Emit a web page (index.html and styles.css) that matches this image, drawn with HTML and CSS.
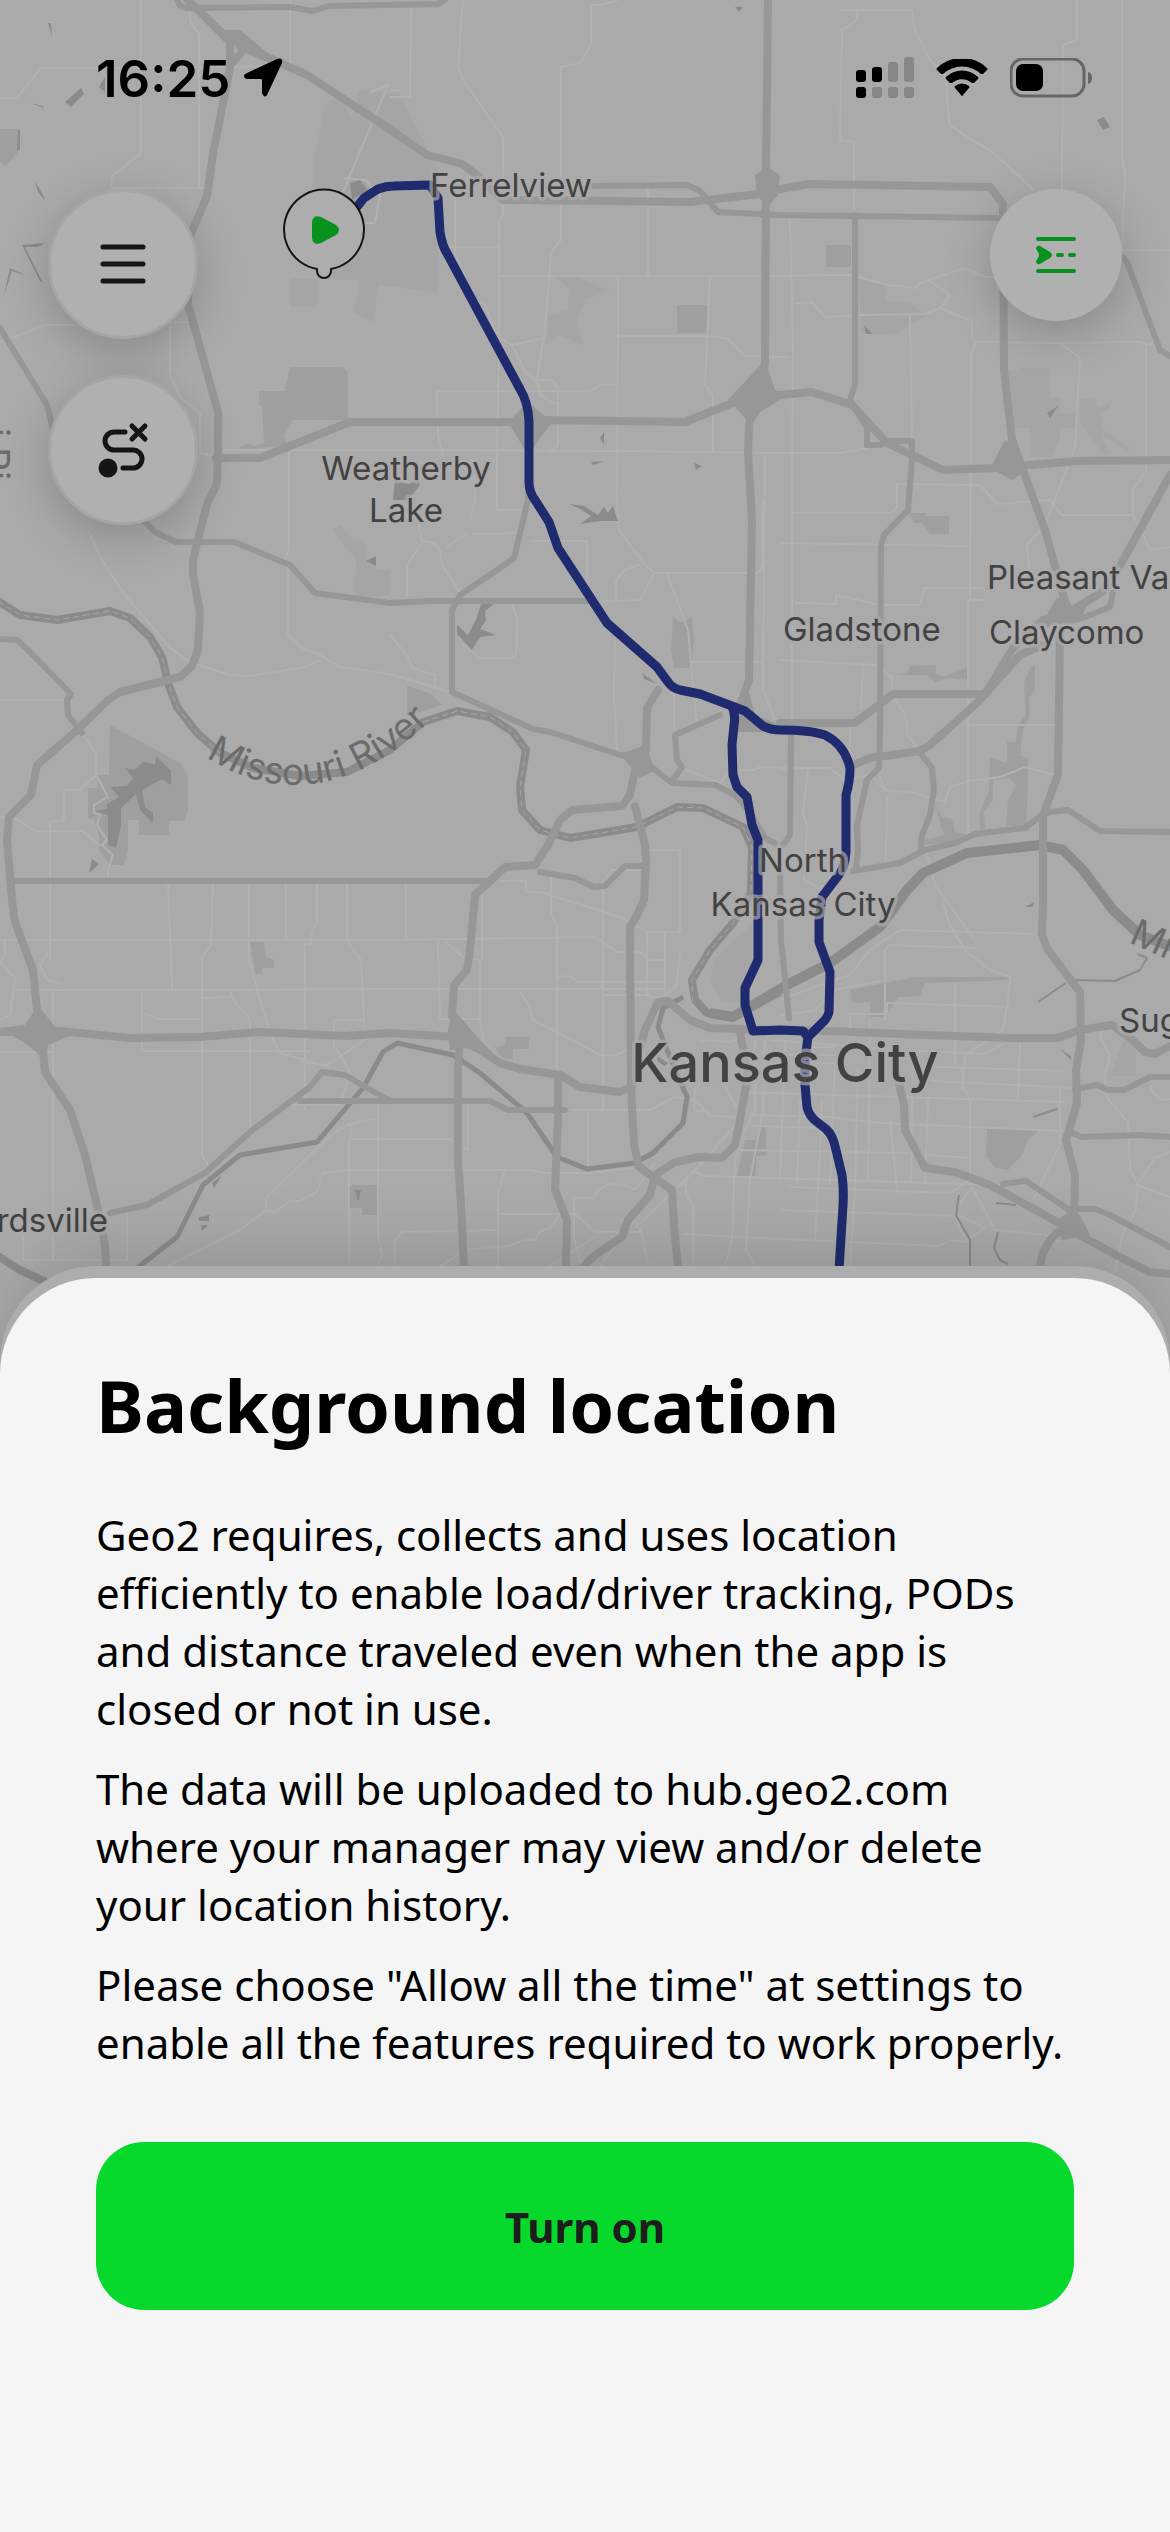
FILE: index.html
```html
<!DOCTYPE html>
<html lang="en">
<head>
  <meta charset="UTF-8">
  <meta name="viewport" content="width=device-width, initial-scale=1.0">
  <title>Background location</title>
  <link rel="stylesheet" href="styles.css">
</head>
<body>
  <div class="screen">

    <!-- Map -->
    <svg class="map" viewBox="0 0 1170 1400" preserveAspectRatio="xMidYMin slice" aria-hidden="true">
      <!-- Parks -->
      <g class="park soft">
        <path d="M325 105L335 97L345 105L352 120L358 90L400 95L438 170V293L405 288L378 285L374 322L354 313L360 280L290 278V307H317V260L340 190L312 190L316 150Z"/>
        <path d="M555 275L575 277L610 290L585 300L577 320L583 346L560 335L546 344L549 315L568 310L569 290Z"/>
        <path d="M858 278L885 286V301L910 302L926 316L895 334H862Z"/>
        <path d="M1008 370H1020V385V368H1050V398H1060V413H1076V428H1060V440L1050 457H1030V428H1012Z"/>
        <path d="M1080 398H1094L1098 408L1110 404V409L1098 412L1104 430L1130 448L1127 452L1100 432L1110 455H1104L1080 422Z"/>
        <path d="M333 530L340 525L354 541H365L366 560L375 570L390 570V595L355 598L356 560Z"/>
        <path d="M733 940L715 960L710 980L720 1000L745 1005L752 985L752 925Z"/>
        <path d="M1124 1040L1136 1048V1076H1110Z"/>
      </g>
      <g class="park">
        <path d="M0 129H20L18 152L6 166L0 162Z"/>
        <path d="M259 391H285L290 367H342L348 373V420H293L284 436L287 445L245 450L239 448L246 443L255 446L264 443L262 405H259Z"/>
        <path d="M677 305H707V333H677Z"/>
        <path d="M826 245H851V267H826Z"/>
        <path d="M909 513H926V516H949V534H930L922 523H914Z"/>
        <path d="M110 725L182 764L188 777V810L184 821H169V835H139V820H128V850L124 865H110L99 850V835L94 820L88 818V788H98L96 775H109Z"/>
        <path d="M673 617L680 622L692 618L694 640L692 664L688 668H674L671 650Z"/>
        <path d="M407 686L430 693L442 705L407 716Z"/>
        <path d="M895 675L907 673L910 666L936 665V674L944 677L968 667V680L950 678L935 682L928 675Z"/>
        <path d="M1031 666H1035V690L1029 698L1030 715L1023 730L1020 756L1028 758L1028 785L1026 826H1006L1008 800L1016 785L1010 778L993 780L993 800L984 812L985 829H980L979 815L989 790L990 758L1007 763L1007 742H1016L1018 725L1026 715L1024 683Z"/>
        <path d="M935 805L942 817L952 819L955 832L966 834L950 842L925 845V840L944 835Z"/>
        <path d="M987 1129H1040L1028 1140L1022 1155L1008 1170L996 1168L986 1157Z"/>
        <path d="M850 990L915 977H1010V980L925 983L920 996L898 997L888 1013L883 1010V1017H870V1002L852 1003Z"/>
        <path d="M350 1185H378V1215H362V1208H350Z"/>
        <path d="M505 1037H529V1049H513V1060L503 1058L495 1048L505 1045Z"/>
        <path d="M745 1140H758L762 1127H766V1155L756 1156V1176H737Z"/>
        <path d="M250 942H264L266 957L274 960V968H262V974H256Z"/>
      </g>

      <!-- Local streets -->
      <g class="street">
        <path d="M141 0V153L112 176L111 188H204"/>
        <path d="M189 12L191 24L199 33V187M0 98H17L41 68L235 67L290 65V0"/>
        <path d="M411 0L410 97H390M463 0L458 68L465 83L503 137V214L499 222V340L497 452V510H525"/>
        <path d="M618 0L600 5H591V45L580 63L561 67V240L551 252L544 340"/>
        <path d="M500 276H765L850 275L888 285L915 288L920 283L965 268L985 277H1000M450 247H498"/>
        <path d="M343 192L388 85L370 93M390 90H400M344 178L365 180L380 195L375 223H360"/>
        <path d="M648 189V275M618 278L617 500L619 530L645 565L654 573L640 600L590 602M618 336H710L727 338L745 356L790 357"/>
        <path d="M710 276L705 385L713 395V453M437 391H590L600 385H617M437 391L438 435L443 455"/>
        <path d="M455 200V255L475 300L485 304L497 337L512 345L525 372L535 380H553L558 390V445L550 453"/>
        <path d="M512 345L544 338L537 378L540 395L556 404"/>
        <path d="M0 342L20 335L45 325H70L190 322M170 322V376L180 397L200 413V453L215 456"/>
        <path d="M215 450H390L620 451L780 453H840L868 448M289 452V550L284 560L288 570V635L302 648L320 655L340 667L390 674L450 692"/>
        <path d="M88 530L102 560L125 595L170 648L190 662L230 675L250 676L305 667L320 660"/>
        <path d="M790 220L793 345L792 500V725M765 455L763 690L775 720M795 304L812 302L825 317L860 315L925 314L940 308L950 295L928 280"/>
        <path d="M910 315L912 440M940 308L972 321V337L976 343L971 355L970 600M976 342L1060 343L1140 342L1150 345L1160 333"/>
        <path d="M1060 343L1080 358L1075 447L1045 525L1027 545L1029 570M1146 343V470L1133 490L1133 515L1150 550L1170 547"/>
        <path d="M840 10H912L915 30L930 60L945 75L950 125L975 142L990 150L1034 190M1077 0V40L1063 45L1062 190"/>
        <path d="M857 8V20L842 30L840 140L854 142V210M1122 0L1122 155L1125 175L1122 250H1170"/>
        <path d="M790 513H890L897 508V484L980 485L997 504L1050 500L1062 515H1132M780 543L970 546V600H985M795 603L836 604V595L880 605H920L924 588H985"/>
        <path d="M780 660L836 663L878 665L893 679L890 695L905 713L908 735L920 753M863 665L861 710M968 600V835M970 725H1055"/>
        <path d="M780 768H830L845 780L870 775L885 790L915 793L945 802L950 787L968 781L1000 777L1025 767L1055 775"/>
        <path d="M808 770L803 815L807 825L804 880M887 797L886 860M885 790L879 775M850 725V765L840 778"/>
        <path d="M473 534L500 534L525 532M470 520L475 500L473 460M418 520L422 541L434 543L440 550L442 565L460 593M407 597V565L420 545"/>
        <path d="M466 534L445 548M530 541H587V600M655 573H758L763 565V500M616 600V580L625 570L641 564M667 573L688 630L697 725M692 662H763"/>
        <path d="M512 604L518 620L516 655L510 658H480L463 645M390 635L407 655L412 668L435 675V690M615 640L614 695L617 750M674 690V730"/>
        <path d="M682 768L720 783L730 770H755L760 767H780"/>
        <path d="M0 700H65M83 735L96 753V775L108 797L94 805V813L100 815L97 825L107 840L102 845L113 855L108 870V880M96 775L80 790H64V820L50 822V960"/>
        <path d="M0 817L15 818L35 831H82L100 845"/>
        <path d="M50 880V950L40 965L47 980L63 984M0 940H390L460 939L595 937L617 952H640L650 960H665"/>
        <path d="M15 990H230L390 989H665M168 880L172 989M213 880L211 945L202 957V1155L208 1165M249 880V960L270 1034L280 1053L305 1060L330 1067"/>
        <path d="M286 880V941M317 880V923L312 933L311 944H305L305 1110M347 880V941L361 960L365 1040M142 991V1051H310M142 1013L160 1019H201"/>
        <path d="M202 998L231 997M230 990L235 1003L245 1012L250 1020V1130M334 1020H365M334 1020V1045L345 1063L350 1073L340 1105H290M300 1062L327 1065L365 1040"/>
        <path d="M53 990V1260M23 1230V1260H127V1213M0 1052H52M5 940V955L0 962L15 978L10 1015L0 1020"/>
        <path d="M406 880V941M438 941L440 1019H480L483 1040L490 1049M445 941L463 957L480 960V1019M482 881V960M500 881H526V892H540L620 917L646 932H680V850H650M551 875V915L557 925V1070"/>
        <path d="M603 880V1110M605 880L612 870H645M519 990L530 1008L533 1020L555 1031L600 1055H617L640 1043M558 977L570 976L578 982H663M600 990L603 980M605 995H650"/>
        <path d="M647 932V995L665 1000M665 933V995L677 985L680 950"/>
        <path d="M166 1267L240 1230L266 1210L275 1212L290 1201H300L317 1192L323 1173L350 1170H530L545 1173L590 1173L633 1168"/>
        <path d="M266 1208V1198L333 1133L350 1124L378 1118V1090M349 1265V1145L352 1125M350 1139H450L468 1150V1105M378 1120V1235L382 1255L378 1266"/>
        <path d="M395 1266V1240L402 1232L498 1230M440 1266L465 1250L508 1246L525 1240H535L540 1231L550 1228L560 1214H575L595 1232H640L635 1220L600 1266"/>
        <path d="M505 1170L498 1193V1266M500 1214H575M574 1210V1198H594L598 1190L610 1184L628 1186L635 1190L655 1163M574 1200V1240L582 1266M550 1266L603 1232"/>
        <path d="M588 1110V1170M570 1110H650L675 1097L695 1100L710 1116L740 1117M635 1228L675 1190L700 1165L740 1120M686 1180V1195L693 1205V1266M695 1172L705 1176L1000 1185"/>
        <path d="M640 1228L643 1240L648 1266M683 1234L780 1239L940 1246L950 1240L965 1242L985 1228L960 1216L780 1210M700 1040L730 1042L745 1036"/>
        <path d="M705 1080L695 1088L694 1110L710 1112M724 1085L737 1108M755 1040V1110L745 1130L735 1160L732 1240L725 1266"/>
        <path d="M765 1040L763 1110L750 1180L746 1250L755 1266M785 1040L780 1180M800 1100L797 1185M822 1100L820 1150L815 1240M835 1060L830 1185M858 1070L855 1190L850 1266"/>
        <path d="M740 1092L900 1097L1065 1102M750 1115L830 1117L880 1123L1063 1131M750 1126L830 1128M740 1150L900 1153L972 1158"/>
        <path d="M770 1040L900 1050L985 1054L1010 1040M800 1047H835M770 1055H835M770 1063H835M910 1066L1065 1071M915 1080L1075 1088"/>
        <path d="M870 1020L868 1180M890 1120L897 1190M913 1050L911 1185M928 1100L925 1184M955 985V1065M962 1068L965 1090L970 1100V1180L950 1193L790 1187M1020 1042L1018 1098"/>
        <path d="M972 1187L955 1210L960 1230L970 1245V1266M972 1187L995 1230L1045 1235L1060 1242M1033 1200L1060 1145L1060 1085"/>
        <path d="M780 1000L820 985L850 975L870 950L900 930L1035 934M885 1020V950L890 945L975 948M942 900L950 925L965 950L990 970L1010 977L1008 1000L1003 1030L965 1055L962 1090"/>
        <path d="M780 1016L815 1010L835 990L880 981M850 1030V1014H887V1003L1010 1007M926 850L935 885L975 940M840 900L805 880"/>
        <path d="M1101 1030V1040L1110 1055L1105 1075L1107 1098L1128 1122L1130 1170L1138 1185L1136 1210L1123 1232L1115 1272M1170 1152L1155 1158L1137 1185L1170 1197M1151 1085V1090L1162 1100L1170 1099"/>
      </g>

      <!-- Rivers and lakes -->
      <g class="water">
        <path class="river" d="M-2 601L20 615L57 620L110 611L130 618L150 637L162 657L168 683L177 707L197 733L220 753L253 768L300 776L347 772L390 750L423 722L457 711L490 717L513 732L526 750L520 787L522 810L540 830L570 838L637 827L677 807L703 808L743 827L752 847L751 893L733 923L710 950L692 980L695 1000L707 1013L733 1017L780 992"/>
        <path class="river wide" d="M710 1013L733 1017L787 985L830 963L880 927L907 890L923 873L967 853L1040 845L1063 850L1083 870L1113 910L1140 935L1172 947"/>
        <path class="river thin" d="M137 1268L177 1237L203 1185L240 1155L317 1142L363 1088L383 1052L397 1043L453 1055L480 1073L527 1113L557 1157L587 1169L635 1163L653 1153L683 1123L687 1097L667 1050L658 1027L663 1008L683 997"/>
        <path class="river" d="M-2 1256L20 1270L46 1282"/>
        <path class="creek" d="M1074 980L1115 981L1140 970L1147 958L1138 954M1038 1002L1066 983M1033 1117L1057 1109"/>
        <path class="creek" d="M959 1195L956 1215L970 1240V1266M998 1232L994 1248L1000 1260L1008 1264M996 1203L1016 1205"/>
        <path d="M156 756L171 771V785L162 779L142 790L145 807L153 813V823L140 810L136 794L121 808V825L116 848L108 845V815L95 811L107 809V804L119 797L110 787L127 786L133 778L125 768L134 770L143 762L155 764Z"/>
        <path d="M570 504L584 506L598 515L604 507L608 513L613 506L618 521H601L580 524L591 516L582 510Z"/>
        <path d="M481 604H494L485 611L486 620L480 629L496 635L480 637L472 650L457 634V625L468 635L476 620Z"/>
        <path d="M395 480L410 484L418 478L420 485L408 500H393Z"/>
        <path d="M1097 120L1104 117L1110 127L1103 130ZM1047 413L1058 406L1050 418ZM735 7H743L739 12ZM864 325L872 334H866ZM366 561L376 556V566Z"/>
        <path d="M65 102L81 88L84 94L71 107ZM30 103L43 106L44 108ZM99 87L105 77V92ZM48 23H51L52 37ZM18 130H20V150H17Z"/>
        <path d="M35 181L44 197L45 200L38 192ZM22 245L45 243L38 247L25 247L43 283L40 281ZM4 295L10 268L27 276L12 271Z"/>
        <path d="M600 438L604 432V445ZM591 462L604 461L593 465ZM694 463L702 466L696 470ZM642 673L657 684L644 679Z"/>
        <path d="M92 859L99 864L89 873ZM199 1217L209 1215V1221H199ZM201 1225L208 1225L202 1231ZM212 1183L222 1175L214 1188ZM355 1190H361L358 1202Z"/>
        <path d="M350 183L360 180L368 190L352 200ZM1025 907L1034 902L1033 907ZM1060 1049L1071 1056V1060ZM656 1055L668 1063L665 1066L658 1062Z"/>
      </g>
      <path class="river-dash" d="M-2 601L20 615L57 620L110 611L130 618L150 637L162 657L168 683L177 707L197 733L220 753"/>
      <path class="river-dash" d="M423 722L457 711L490 717L513 732L526 750L520 787L522 810L540 830L570 838L637 827L677 807L703 808L743 827L752 847L751 893L733 923L710 950L692 980L693 1020"/>

      <!-- Highways -->
      <g class="road">
        <path d="M177 0L180 6L187 8L290 7L313 11L328 6L438 4L445 0"/>
        <path d="M587 186L687 185L700 191L718 212L780 215L998 218"/>
        <path d="M0 328L47 405L52 425L70 480L145 522L155 532L176 542H234L290 565L315 593L390 603L430 601H590"/>
        <path d="M855 215V385L850 400L867 428V445H880L890 441H912V460L908 510L884 535L881 545L880 730L879 768L867 780L857 825L858 850L856 870"/>
        <path d="M528 455V500L514 558L497 570L460 595L452 610V692L533 729L550 732L620 755L640 758L672 783L715 785L735 795L750 812L765 838L775 843"/>
        <path d="M15 881H487M540 872L575 878L594 887L605 886L625 866H645"/>
        <path d="M720 715L675 735L677 760L682 767L673 780M791 735L790 835L783 845M780 870L781 940L789 1018"/>
        <path d="M0 639L17 640L30 652L71 694L67 700L68 715L82 733M1120 255L1127 262L1160 350L1170 356"/>
        <path d="M110 1213L147 1205L205 1173L250 1132L310 1087L322 1072L345 1075L390 1101"/>
        <path d="M300 1101H490L508 1110H565"/>
        <path d="M920 753L932 768L934 790L930 815L922 835L921 850M853 871L900 863L925 850L955 843L975 834L1025 828L1042 815L1050 812L1068 810L1100 831L1170 832"/>
        <path d="M1003 1184L1026 1181L1068 1209H1095L1110 1215L1170 1247M1075 1089L1097 1085L1108 1090H1124L1150 1077H1170M1070 1132L1082 1137L1140 1135L1170 1137"/>
        <path d="M1066 622L1085 617L1110 607L1113 592"/>
      </g>
      <g class="road major">
        <path d="M188 0L230 42V68L213 154L207 196L190 236L188 304L218 412V450L217 484L207 504L193 560V575L200 612L198 650L192 666L180 677L120 692L108 700L75 732L37 765L31 795L9 817L7 840L12 900L15 922L33 970L37 1010L42 1040L45 1072L70 1110L85 1155L98 1210L105 1245L107 1275"/>
        <path d="M188 0L225 36L267 57L307 75L385 126L427 155L462 164L477 175L503 200H520L690 202L767 193L780 189L810 184L990 187L1003 204L1004 370L1012 440L1045 530L1066 605M233 62L245 48L265 57"/>
        <path d="M216 458H260L350 422H510L540 420L685 422L735 402L755 395L780 395L812 392L852 405L887 443L943 470L997 468L1077 461L1170 460"/>
        <path d="M768 0L766 175L765 365L755 385L750 410L748 450L752 520L749 680L740 705L738 728H765"/>
        <path d="M658 690L647 708L646 750L635 770L630 795L622 806L572 810L560 820L548 845L535 865L505 867L475 895L470 950L467 970L454 985L452 1015L460 1035L458 1070V1160L461 1205L464 1268"/>
        <path d="M635 806L645 845L646 860L644 900L637 915L630 927L631 1085L634 1145L639 1167L672 1190L674 1225L678 1268"/>
        <path d="M0 1032L60 1031L130 1038L200 1037L260 1032L345 1036L390 1033L457 1037L480 1050L500 1063L520 1069L560 1075L580 1087L620 1092L632 1086L633 1070L645 1030L658 1002L668 1001L690 1020L710 1028L770 1030L830 1031L900 1034L1010 1038H1058L1080 1030L1112 1025L1130 1038L1145 1052L1155 1054L1170 1046"/>
        <path d="M558 1075V1120L555 1190L567 1220L566 1268M740 1032L748 1075L740 1120L735 1145L722 1158L700 1157L675 1162L655 1175L650 1195L628 1220L622 1237L595 1255L582 1268"/>
        <path d="M897 1075L904 1105L905 1130L925 1168L955 1172L990 1185L1050 1218L1085 1238L1120 1257L1150 1272L1170 1274M1068 1222L1050 1240L1042 1255L1040 1268"/>
        <path d="M1060 630L1058 775L1043 815V900L1042 935L1048 950L1080 992L1081 1040L1076 1070L1077 1103L1066 1140L1075 1175L1074 1225"/>
        <path d="M780 723H855L893 694H985L1013 648L1043 620L1073 610L1102 592L1120 566L1170 475M853 765L870 758L920 751L930 745L978 702L1020 655L1043 645"/>
      </g>
      <g class="junction">
        <path d="M508 422L528 402L552 422L528 455Z"/>
        <path d="M728 400L765 360L775 390L790 394L760 412L752 425Z"/>
        <path d="M755 175L768 167L780 175L778 195L767 208L757 195Z"/>
        <path d="M0 1028L25 1025L38 1005L56 1028L75 1034L48 1045L45 1060L28 1045Z"/>
        <path d="M454 1010L480 1040L500 1060L465 1048L450 1050L448 1030Z"/>
        <path d="M990 468L1005 440L1022 455L1024 465L1020 475L1012 480Z"/>
        <path d="M620 754L646 745L655 770L640 778Z"/>
        <path d="M1056 1222L1068 1212L1080 1215L1090 1235L1062 1240Z"/>
        <path d="M218 30L240 30L270 55L240 52Z"/>
        <path d="M738 710L747 685L755 715L780 725L740 730Z"/>
        <path d="M1055 600L1065 595L1075 610L1090 600L1080 620L1040 628Z"/>
      </g>

      <!-- Route -->
      <g class="route">
        <path d="M356 208L364 198L378 182Q384 175 392 175L400 186" class="guide"/>
        <path d="M356 208L364 198L378 189Q386 186 394 186L430 185L438 198L440 232Q442 246 448 255L520 389Q528 402 529 421V482Q529 492 535 500L549 522L558 548L607 623L657 667L668 682Q672 688 680 690L700 694L732 706L745 711L763 726Q770 730 780 730Q810 730 825 735Q845 745 850 768Q850 782 846 795V852Q845 868 838 876L822 897L819 920V942L830 972L829 1012Q828 1016 825 1020L808 1037L805 1060V1085L807 1107Q809 1116 817 1122L826 1129Q833 1135 836 1150L842 1175Q844 1190 843 1205L839 1270"/>
        <path d="M732 706Q736 716 734 725L732 745L733 775L737 787L747 797L752 825L758 840V960L745 988V1005L753 1031L780 1030L803 1031L808 1037"/>
      </g>

      <!-- Place names -->
      <g class="label">
        <text x="430" y="197">Ferrelview</text>
        <text x="406" y="480" text-anchor="middle">Weatherby</text>
        <text x="406" y="522" text-anchor="middle">Lake</text>
        <text x="987" y="589">Pleasant Val</text>
        <text x="783" y="641">Gladstone</text>
        <text x="989" y="644">Claycomo</text>
        <text x="803" y="872" text-anchor="middle">North</text>
        <text x="803" y="916" text-anchor="middle">Kansas City</text>
        <text x="1119" y="1032">Sug</text>
        <text x="108" y="1232" text-anchor="end">rdsville</text>
        <text class="label-city" x="785" y="1082" text-anchor="middle">Kansas City</text>
      </g>
      <path id="river-curve" class="guide" d="M206 757C270 798 355 805 450 700"/>
      <g class="label-river">
        <text><textPath href="#river-curve">Missouri River</textPath></text>
        <text transform="translate(1128 942) rotate(24)">Mi</text>
        <text transform="translate(-17 428) rotate(90)">i Ri</text>
      </g>

      <!-- Start pin -->
      <g class="pin">
        <path d="M317 269V271a7 7 0 0 0 14 0V269A40 40 0 1 0 317 269Z"/>
        <path class="pin-play" d="M312 222Q313 214 321 217L336 225Q342 230 336 235L321 243Q313 246 312 238Z"/>
      </g>
    </svg>

    <!-- Status bar -->
    <header class="status-bar">
      <div class="clock">
        <span>16:25</span>
        <svg width="40" height="40" viewBox="0 0 40 40"><path d="M34 1Q40-1 39 5L24 37Q22 40 20 37Q19 36 19 34V22Q19 21 18 21H5Q1 21 1 18Q1 16 4 15Z"/></svg>
      </div>
      <div class="indicators">
        <svg width="58" height="42" viewBox="0 0 58 42">
          <rect x="0" y="13" width="10" height="12" rx="3"/>
          <rect x="16" y="10" width="10" height="15" rx="3"/>
          <rect x="0" y="30" width="10" height="11" rx="3"/>
          <g class="dim">
            <rect x="32" y="5" width="10" height="20" rx="3"/>
            <rect x="48" y="0" width="10" height="25" rx="3"/>
            <rect x="16" y="30" width="10" height="11" rx="3"/>
            <rect x="32" y="30" width="10" height="11" rx="3"/>
            <rect x="48" y="30" width="10" height="11" rx="3"/>
          </g>
        </svg>
        <svg width="52" height="38" viewBox="0 0 52 38">
          <path d="M1 11Q0 10 1 9A36 36 0 0 1 51 9Q52 10 51 11L47 15Q46 15 45 15A28 28 0 0 0 7 15Q6 15 5 15Z"/>
          <path d="M10 20Q9 19 10 18A23 23 0 0 1 42 18Q43 19 42 20L38 24Q37 24 36 24A15 15 0 0 0 16 24Q15 24 14 24Z"/>
          <path d="M19 29Q18 28 19 27A11 11 0 0 1 33 27Q34 28 33 29L27 36Q26 38 25 36Z"/>
        </svg>
        <svg width="84" height="40" viewBox="0 0 84 40">
          <rect class="battery-shell" x="1" y="1" width="73" height="37" rx="12"/>
          <rect x="6" y="6" width="27" height="27" rx="7"/>
          <path class="battery-tip" d="M78 14Q82 15 82 20Q82 25 78 26Z"/>
        </svg>
      </div>
    </header>

    <!-- Map controls -->
    <div class="controls">
      <div class="control-group">
        <button class="map-button" type="button" aria-label="Menu">
          <svg width="46" height="40" viewBox="0 0 46 40"><path d="M3 3H43M3 20H43M3 37H43"/></svg>
        </button>
        <button class="map-button" type="button" aria-label="Clear route">
          <svg width="52" height="58" viewBox="0 0 52 58">
            <path d="M28 11H17a9 9 0 0 0 0 18H36a8 8 0 0 1 0 18H26M35 5L48 18M48 5L35 18"/>
            <circle cx="11" cy="47" r="7"/>
          </svg>
        </button>
      </div>
      <button class="map-button small" type="button" aria-label="Follow route">
        <svg width="40" height="36" viewBox="0 0 40 36">
          <path d="M2 2H38M22 18H26M34 18H38M2 34H38"/>
          <path class="arrow" d="M0 11Q1 8 4 9L14 15Q18 18 14 21L4 27Q1 28 0 25Q0 24 2 21Q4 18 2 15Q0 12 0 11Z"/>
        </svg>
      </button>
    </div>

    <!-- Permission sheet -->
    <main class="sheet">
      <h1>Background location</h1>
      <p>Geo2 requires, collects and uses location efficiently to enable load/driver tracking, PODs and distance traveled even when the app is closed or not in use.</p>
      <p>The data will be uploaded to hub.geo2.com where your manager may view and/or delete your location history.</p>
      <p>Please choose "Allow all the time" at settings to enable all the features required to work properly.</p>
      <button class="turn-on" type="button">Turn on</button>
    </main>
  </div>
</body>
</html>
```
FILE: styles.css
```css
* {
  box-sizing: border-box;
}

body {
  margin: 0;
  background-color: #f5f5f5;
  color: #000;
  font-family: "Noto Sans", sans-serif;
}

.screen {
  position: relative;
  display: flex;
  flex-direction: column;
  min-height: 100vh;
  overflow: hidden;
}

/* Map */
.map {
  position: absolute;
  top: 0;
  left: 0;
  width: 100%;
  height: 1400px;
  background-color: #aaa;
  fill: none;
  stroke-linejoin: round;
  font-family: Inter, "Liberation Sans", sans-serif;
}

.park {
  fill: #9f9f9f;
}

.park.soft {
  fill: #a5a5a5;
}

.street {
  stroke: #b1b1b1;
  stroke-width: 2;
}

.water {
  fill: #8b8b8b;
}

.river {
  fill: none;
  stroke: #8b8b8b;
  stroke-width: 8;
}

.river.wide {
  stroke-width: 10;
}

.river.thin {
  stroke-width: 5;
}

.creek {
  fill: none;
  stroke: #8b8b8b;
  stroke-width: 2;
}

.river-dash {
  stroke: #a8a8a8;
  stroke-width: 1;
  stroke-dasharray: 6 4;
}

.road {
  stroke: #979797;
  stroke-width: 6;
  stroke-linecap: round;
}

.road.major {
  stroke-width: 8;
}

.junction {
  fill: #979797;
}

.route {
  stroke: #1f2b6e;
  stroke-width: 9;
}

.guide {
  stroke: none;
}

.label {
  fill: #424242;
  stroke: rgba(170, 170, 170, 0.7);
  stroke-width: 7;
  paint-order: stroke;
  font-size: 33px;
}

.label-city {
  font-size: 54px;
  font-weight: 500;
}

.label-river {
  fill: #6c6c6c;
  font-size: 37px;
}

.pin {
  fill: #adadad;
  stroke: #151515;
  stroke-width: 2;
}

.pin-play {
  fill: #07921d;
  stroke: none;
}

/* Status bar */
.status-bar {
  position: relative;
  display: flex;
  justify-content: space-between;
  align-items: center;
  height: 156px;
  padding: 0 76px 0 96px;
}

.clock {
  display: flex;
  align-items: center;
  gap: 13px;
  font-family: Inter, "Liberation Sans", sans-serif;
  font-size: 51px;
  font-weight: 600;
}

.indicators {
  display: flex;
  align-items: center;
  gap: 22px;
}

.dim {
  fill: #878787;
}

.battery-shell {
  fill: none;
  stroke: #666;
  stroke-width: 3;
}

.battery-tip {
  fill: #666;
}

/* Round buttons over the map */
.controls {
  position: relative;
  display: flex;
  justify-content: space-between;
  align-items: flex-start;
  padding: 33px 48px;
}

.control-group {
  display: flex;
  flex-direction: column;
  gap: 36px;
}

.map-button {
  display: flex;
  align-items: center;
  justify-content: center;
  width: 150px;
  height: 150px;
  padding: 0;
  border: 3px solid #a5a5a5;
  border-radius: 50%;
  background-color: #b0b0b0;
  box-shadow: 0 12px 48px rgba(0, 0, 0, 0.2);
  cursor: pointer;
}

.map-button svg {
  fill: #151515;
  stroke: #151515;
  stroke-width: 5;
  stroke-linecap: round;
}

.map-button path {
  fill: none;
}

.map-button.small {
  width: 132px;
  height: 132px;
  border: none;
}

.map-button.small svg {
  stroke: #07921d;
  stroke-width: 4;
}

.map-button.small .arrow {
  fill: #07921d;
  stroke: none;
}

/* Bottom sheet */
.sheet {
  position: relative;
  margin-top: auto;
  padding: 78px 96px 222px;
  border-radius: 96px 96px 0 0;
  background-color: #f5f5f5;
  box-shadow: 0 -12px 0 #adadad, 0 -24px 72px rgba(0, 0, 0, 0.15);
}

.sheet h1 {
  margin: 0 0 52px;
  font-size: 72px;
  line-height: 98px;
}

.sheet p {
  margin: 0 0 22px;
  font-size: 42px;
  line-height: 58px;
}

.turn-on {
  display: block;
  width: 100%;
  height: 168px;
  margin-top: 70px;
  border: none;
  border-radius: 48px;
  background-color: #06d92c;
  color: #1d1d1d;
  font-family: inherit;
  font-size: 42px;
  font-weight: 700;
  cursor: pointer;
}
```
